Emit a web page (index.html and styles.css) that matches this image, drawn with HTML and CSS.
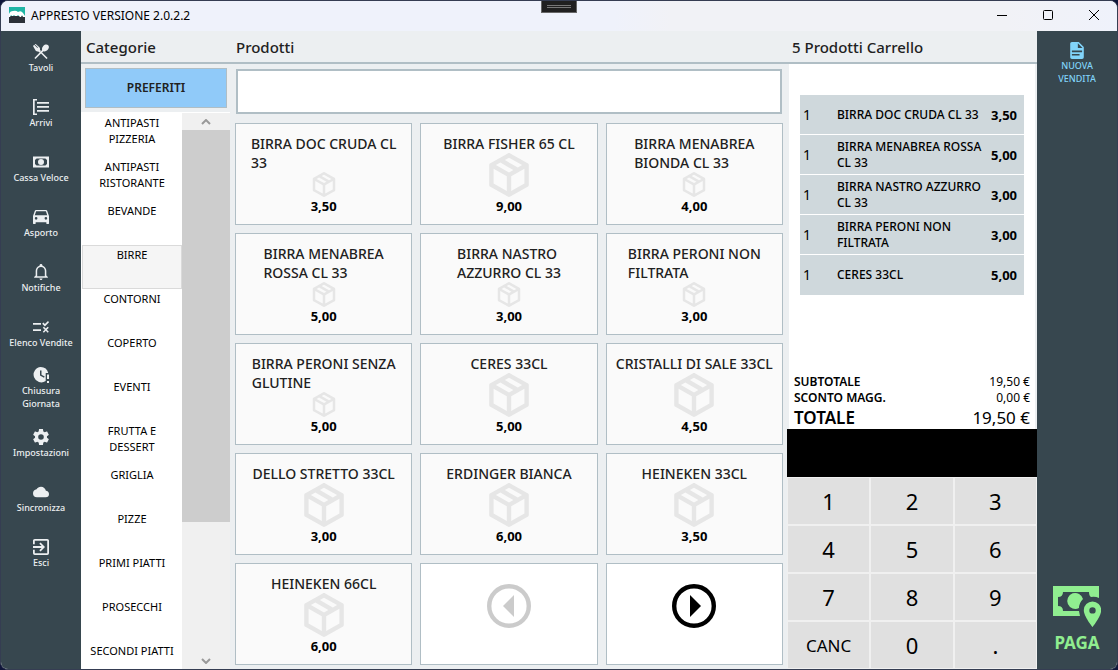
FILE: index.html
```html
<!DOCTYPE html>
<html lang="it">
<head>
<meta charset="utf-8">
<meta name="viewport" content="width=device-width, initial-scale=1">
<title>APPRESTO</title>
<link rel="stylesheet" href="styles.css">
</head>
<body>
<svg class="defs" aria-hidden="true">
  <symbol id="box" viewBox="3 2 18 20"><path d="M21,16.5C21,16.88 20.79,17.21 20.47,17.38L12.57,21.82C12.41,21.94 12.21,22 12,22C11.79,22 11.59,21.94 11.43,21.82L3.53,17.38C3.21,17.21 3,16.88 3,16.5V7.5C3,7.12 3.21,6.79 3.53,6.62L11.43,2.18C11.59,2.06 11.79,2 12,2C12.21,2 12.41,2.06 12.57,2.18L20.47,6.62C20.79,6.79 21,7.12 21,7.5V16.5M12,4.15L10.11,5.22L16,8.61L17.96,7.5L12,4.15M6.04,7.5L12,10.85L13.96,9.75L8.08,6.35L6.04,7.5M5,15.91L11,19.29V12.58L5,9.21V15.91M19,15.91V9.21L13,12.58V19.29L19,15.91Z"/></symbol>
</svg>
<div class="window">
  <header class="titlebar">
    <svg class="logo" viewBox="0 0 16 16"><path fill="#1fb5a5" d="M0 0h16v9H0z"/><path fill="#2b3038" d="M0 9h16v7H0z"/><path fill="#fff" d="M0 9V7q1-3 4-3 3-1 5 1 3-2 5 1l2 3v1h-2l-1-2-1 2h-1L9 8l-1 1H6L5 8 4 9H3L2 8l-1 2H0z"/></svg>
    <h1 class="app-name">APPRESTO VERSIONE 2.0.2.2</h1>
    <div class="grip"><span></span><span></span></div>
    <div class="win-buttons">
      <button type="button" aria-label="Riduci"><svg viewBox="0 0 12 12"><path d="M1 6.5h10"/></svg></button>
      <button type="button" aria-label="Ingrandisci"><svg viewBox="0 0 12 12"><rect x="1.500" y="1.500" width="9" height="9" rx="1"/></svg></button>
      <button type="button" aria-label="Chiudi"><svg viewBox="0 0 12 12"><path d="M1 1l10 10M11 1L1 11"/></svg></button>
    </div>
  </header>
  <div class="app">
    <nav class="sidebar">
      <button type="button"><svg viewBox="2 3 20 19"><path d="M14.88 11.53L13.41 13l6.88 6.88-1.41 1.41L12 14.41l-6.88 6.88-1.41-1.41 9.76-9.76c-.71-1.53-.21-3.68 1.38-5.27 1.91-1.92 4.650-2.280 6.110-.820 1.470 1.470 1.110 4.210-.810 6.120-1.590 1.590-3.740 2.090-5.270 1.380zM2.600 4.300l.9-.9 4.100 4 .6-.6-4-4 .9-.6 4.800 4.400c1 1.100 1 2.200.7 3.200l1.400 1.400-2 2-1.400-1.400c-1 .3-2.200.2-3.200-.8L2 5l.6-.7z"/></svg>Tavoli</button>
      <button type="button"><svg viewBox="0 0 16 16"><path d="M0 0h4v1.500H1.700v13H4V16H0zM4 3h12v1.800H4zm0 4h12v1.800H4zm0 4h12v1.800H4z"/></svg>Arrivi</button>
      <button type="button"><svg viewBox="0 0 16 16"><path fill-rule="evenodd" d="M0 2.500h16v11H0zM3.600 4.500L2 6v4l1.600 1.500h8.800L14 10V6l-1.600-1.500z"/><path fill-rule="evenodd" d="M8 5a3 3 0 110 6 3 3 0 010-6z"/></svg>Cassa Veloce</button>
      <button type="button"><svg viewBox="3 4 18 18"><path fill-rule="evenodd" d="M18.920 6C18.720 5.420 18.160 5 17.500 5H6.500C5.840 5 5.280 5.420 5.080 6L3 12V20A1 1 0 004 21H5A1 1 0 006 20V19H18V20A1 1 0 0019 21H20A1 1 0 0021 20V12zM5 11L6.500 6.500H17.500L19 11zM6.500 13a1.500 1.500 0 110 3 1.500 1.500 0 010-3zM17.500 13a1.500 1.500 0 110 3 1.500 1.500 0 010-3z"/></svg>Asporto</button>
      <button type="button"><svg viewBox="2 2 20 21"><path d="M10 21H14C14 22.1 13.1 23 12 23S10 22.1 10 21M21 19V20H3V19L5 17V11C5 7.9 7 5.2 10 4.3V4C10 2.9 10.9 2 12 2S14 2.9 14 4V4.3C17 5.2 19 7.9 19 11V17L21 19M17 11C17 8.2 14.8 6 12 6S7 8.2 7 11V18H17V11Z"/></svg>Notifiche</button>
      <button type="button"><svg viewBox="0 0 16 16"><path d="M0 4h8v1.700H0zm0 6.200h8v1.700H0zM9.200 4.800l1.200-1.200 1.500 1.500L15 2l1 1.200-4.100 4.200zM9.800 8.700l1.100-1 1.900 1.900 1.900-1.900 1.100 1-2 2 2 2-1.100 1.100-1.900-2-1.900 2-1.100-1.100 2-2z"/></svg>Elenco Vendite</button>
      <button type="button"><svg viewBox="0 0 16 16"><path fill-rule="evenodd" d="M7.700 0a7.700 7.700 0 017.500 6H12.700v8A7.700 7.700 0 117.700 0zM7 3.500v5l4 2.200.7-1.100-3.200-1.900V3.500zM14 7.500h2V12h-2zM14 14h2v2h-2z"/></svg>Chiusura<br>Giornata</button>
      <button type="button"><svg viewBox="2 2 20 20"><path d="M12,15.5A3.5,3.5 0 0,1 8.5,12A3.5,3.5 0 0,1 12,8.5A3.5,3.5 0 0,1 15.5,12A3.5,3.5 0 0,1 12,15.5M19.43,12.97C19.47,12.65 19.5,12.33 19.5,12C19.5,11.67 19.47,11.34 19.43,11L21.54,9.37C21.73,9.22 21.78,8.95 21.66,8.73L19.66,5.27C19.54,5.05 19.27,4.96 19.05,5.05L16.56,6.05C16.04,5.66 15.5,5.32 14.87,5.07L14.5,2.42C14.46,2.18 14.25,2 14,2H10C9.75,2 9.54,2.18 9.5,2.42L9.13,5.07C8.5,5.32 7.96,5.66 7.44,6.05L4.95,5.05C4.73,4.96 4.46,5.05 4.34,5.27L2.34,8.73C2.21,8.95 2.27,9.22 2.46,9.37L4.57,11C4.53,11.34 4.5,11.67 4.5,12C4.5,12.33 4.53,12.65 4.57,12.97L2.46,14.63C2.27,14.78 2.21,15.05 2.34,15.27L4.34,18.73C4.46,18.95 4.73,19.03 4.95,18.95L7.44,17.94C7.96,18.34 8.5,18.68 9.13,18.93L9.5,21.58C9.54,21.82 9.75,22 10,22H14C14.25,22 14.46,21.82 14.5,21.58L14.87,18.93C15.5,18.67 16.04,18.34 16.56,17.94L19.05,18.95C19.27,19.03 19.54,18.95 19.66,18.73L21.66,15.27C21.78,15.05 21.73,14.78 21.54,14.63L19.43,12.97Z"/></svg>Impostazioni</button>
      <button type="button"><svg viewBox="0 0 24 24"><path d="M19.35,10.03C18.67,6.59 15.64,4 12,4C9.11,4 6.6,5.64 5.35,8.03C2.34,8.36 0,10.9 0,14A6,6 0 0,0 6,20H19A5,5 0 0,0 24,15C24,12.36 21.95,10.22 19.35,10.03Z"/></svg>Sincronizza</button>
      <button type="button"><svg viewBox="3 3 18 18"><path d="M19,3H5C3.89,3 3,3.89 3,5V9H5V5H19V19H5V15H3V19A2,2 0 0,0 5,21H19A2,2 0 0,0 21,19V5C21,3.89 20.1,3 19,3M10.08,15.58L11.5,17L16.5,12L11.5,7L10.08,8.41L12.67,11H3V13H12.67L10.08,15.58Z"/></svg>Esci</button>
    </nav>
    <main class="workspace">
      <div class="headings"><h2>Categorie</h2><h2>Prodotti</h2><h2>5 Prodotti Carrello</h2></div>
      <section class="categories">
        <button type="button" class="favorites">PREFERITI</button>
        <div class="category-area">
          <div class="category-list">
            <button type="button">ANTIPASTI<br>PIZZERIA</button>
            <button type="button">ANTIPASTI<br>RISTORANTE</button>
            <button type="button">BEVANDE</button>
            <button type="button" class="selected">BIRRE</button>
            <button type="button">CONTORNI</button>
            <button type="button">COPERTO</button>
            <button type="button">EVENTI</button>
            <button type="button">FRUTTA E<br>DESSERT</button>
            <button type="button">GRIGLIA</button>
            <button type="button">PIZZE</button>
            <button type="button">PRIMI PIATTI</button>
            <button type="button">PROSECCHI</button>
            <button type="button">SECONDI PIATTI</button>
          </div>
          <div class="scrollbar">
            <svg viewBox="0 0 10 6"><path d="M1 5l4-4 4 4"/></svg>
            <div class="track"><div class="thumb"></div></div>
            <svg viewBox="0 0 10 6"><path d="M1 1l4 4 4-4"/></svg>
          </div>
        </div>
      </section>
      <section class="products">
        <input class="search" type="text" aria-label="Cerca prodotto">
        <div class="cards">
          <button type="button" class="card"><span class="name">BIRRA DOC CRUDA CL<br>33</span><svg><use href="#box"/></svg><b>3,50</b></button>
          <button type="button" class="card"><span class="name">BIRRA FISHER 65 CL</span><svg><use href="#box"/></svg><b>9,00</b></button>
          <button type="button" class="card"><span class="name">BIRRA MENABREA<br>BIONDA CL 33</span><svg><use href="#box"/></svg><b>4,00</b></button>
          <button type="button" class="card"><span class="name">BIRRA MENABREA<br>ROSSA CL 33</span><svg><use href="#box"/></svg><b>5,00</b></button>
          <button type="button" class="card"><span class="name">BIRRA NASTRO<br>AZZURRO CL 33</span><svg><use href="#box"/></svg><b>3,00</b></button>
          <button type="button" class="card"><span class="name">BIRRA PERONI NON<br>FILTRATA</span><svg><use href="#box"/></svg><b>3,00</b></button>
          <button type="button" class="card"><span class="name">BIRRA PERONI SENZA<br>GLUTINE</span><svg><use href="#box"/></svg><b>5,00</b></button>
          <button type="button" class="card"><span class="name">CERES 33CL</span><svg><use href="#box"/></svg><b>5,00</b></button>
          <button type="button" class="card"><span class="name">CRISTALLI DI SALE 33CL</span><svg><use href="#box"/></svg><b>4,50</b></button>
          <button type="button" class="card"><span class="name">DELLO STRETTO 33CL</span><svg><use href="#box"/></svg><b>3,00</b></button>
          <button type="button" class="card"><span class="name">ERDINGER BIANCA</span><svg><use href="#box"/></svg><b>6,00</b></button>
          <button type="button" class="card"><span class="name">HEINEKEN 33CL</span><svg><use href="#box"/></svg><b>3,50</b></button>
          <button type="button" class="card"><span class="name">HEINEKEN 66CL</span><svg><use href="#box"/></svg><b>6,00</b></button>
          <button type="button" class="pager previous" aria-label="Pagina precedente"><svg viewBox="0 0 44 44"><circle cx="22" cy="22" r="19.800"/><path d="M27 11v22L16 22z"/></svg></button>
          <button type="button" class="pager" aria-label="Pagina successiva"><svg viewBox="0 0 44 44"><circle cx="22" cy="22" r="19.800"/><path d="M18 11v22l11-11z"/></svg></button>
        </div>
      </section>
      <section class="cart">
        <div class="receipt">
          <table class="lines">
            <tbody>
              <tr><td class="qty">1</td><td>BIRRA DOC CRUDA CL 33</td><td class="amount">3,50</td></tr>
              <tr><td class="qty">1</td><td>BIRRA MENABREA ROSSA<br>CL 33</td><td class="amount">5,00</td></tr>
              <tr><td class="qty">1</td><td>BIRRA NASTRO AZZURRO<br>CL 33</td><td class="amount">3,00</td></tr>
              <tr><td class="qty">1</td><td>BIRRA PERONI NON<br>FILTRATA</td><td class="amount">3,00</td></tr>
              <tr><td class="qty">1</td><td>CERES 33CL</td><td class="amount">5,00</td></tr>
            </tbody>
          </table>
          <dl class="totals">
            <div><dt>SUBTOTALE</dt><dd>19,50 €</dd></div>
            <div><dt>SCONTO MAGG.</dt><dd>0,00 €</dd></div>
            <div class="grand"><dt>TOTALE</dt><dd>19,50 €</dd></div>
          </dl>
        </div>
        <div class="display"></div>
        <div class="keypad">
          <button type="button">1</button><button type="button">2</button><button type="button">3</button>
          <button type="button">4</button><button type="button">5</button><button type="button">6</button>
          <button type="button">7</button><button type="button">8</button><button type="button">9</button>
          <button type="button" class="cancel">CANC</button><button type="button">0</button><button type="button">.</button>
        </div>
      </section>
    </main>
    <aside class="actions">
      <button type="button" class="new-sale"><svg viewBox="4 2 16 20"><path d="M13,9H18.5L13,3.5V9M6,2H14L20,8V20A2,2 0 0,1 18,22H6C4.89,22 4,21.1 4,20V4C4,2.89 4.89,2 6,2M15,18V16H6V18H15M18,14V12H6V14H18Z"/></svg>NUOVA<br>VENDITA</button>
      <button type="button" class="pay"><svg viewBox="0 0 48 41"><path fill-rule="evenodd" d="M0 0h46v12q-4-2-8-1-2-1-2-5H10q0 5-5 5v9q5 0 5 5h16l1 5H0z"/><path d="M30 13a8 8 0 10-4 9q0-5 4-9z"/><path fill-rule="evenodd" d="M39.500 15.500a8.700 8.700 0 018.700 8.700c0 6-8.700 16.800-8.700 16.800s-8.700-10.800-8.700-16.800a8.700 8.700 0 018.700-8.700zm0 5.700a3.200 3.200 0 100 6.400 3.200 3.200 0 000-6.400z"/></svg>PAGA</button>
    </aside>
  </div>
</div>
</body>
</html>
```
FILE: styles.css
```css
* { box-sizing: border-box; }

body {
  margin: 0;
  background: #10163a;
  font-family: "Noto Sans", "Open Sans", sans-serif;
  font-size: 12px;
  color: #000;
}

button {
  margin: 0;
  padding: 0;
  border: 0;
  background: none;
  font: inherit;
  color: inherit;
}

h1, h2, dl, dd { margin: 0; }

.defs { display: none; }

.window {
  display: flex;
  flex-direction: column;
  height: 100vh;
  min-height: 640px;
  border: 1px solid #353d52;
  border-radius: 8px;
  overflow: hidden;
  background: #eceff1;
}

.titlebar {
  position: relative;
  display: flex;
  align-items: center;
  flex: none;
  height: 30px;
  padding: 0 0 2px 8px;
  background: linear-gradient(90deg, #eff2fb 55%, #f1f2f6 60%, #f1f2f6 90%, #eff2fb);
}

.logo { width: 16px; height: 16px; margin-right: 6px; }

.app-name { font-size: 12px; font-weight: 400; }

.grip {
  position: absolute;
  top: -1px;
  left: 50%;
  display: flex;
  flex-direction: column;
  justify-content: center;
  gap: 1px;
  width: 36px;
  height: 13px;
  padding: 0 5px;
  margin-left: -18px;
  border: 1px solid #666;
  background: #202020;
}

.grip span { height: 1px; background: #777; }

.win-buttons { display: flex; height: 100%; margin-left: auto; }

.win-buttons button {
  display: flex;
  align-items: center;
  justify-content: center;
  width: 46px;
}

.win-buttons svg { width: 12px; height: 12px; fill: none; stroke: #000; }

.app { display: flex; flex: 1; min-height: 0; }

.sidebar, .actions {
  display: flex;
  flex-direction: column;
  flex: none;
  width: 80px;
  background: #37474f;
}

.sidebar button {
  display: flex;
  flex-direction: column;
  align-items: center;
  justify-content: center;
  height: 55px;
}

.sidebar button, .new-sale {
  font-size: 9px;
  font-weight: 500;
  line-height: 13px;
  color: #eceff1;
}

.sidebar svg { width: 16px; height: 16px; margin-bottom: 1px; fill: #eceff1; }

.workspace {
  display: grid;
  grid-template-columns: 154px 1fr 250px;
  grid-template-rows: 33px 1fr;
  flex: 1;
  min-width: 0;
}

.headings {
  display: grid;
  grid-template-columns: subgrid;
  grid-column: 1 / -1;
  align-items: center;
  border-bottom: 2px solid #b0bec5;
}

.headings h2 {
  padding-left: 5px;
  font-size: 15px;
  font-weight: 500;
  color: #212121;
}

.headings h2:nth-child(2) { padding-left: 1px; }

.categories {
  display: flex;
  flex-direction: column;
  min-height: 0;
  padding-right: 5px;
}

.favorites {
  flex: none;
  height: 40px;
  margin: 4px 3px 4px 4px;
  padding-bottom: 2px;
  border: 1px solid #b0bec5;
  background: #90caf9;
  font-size: 12px;
  font-weight: 600;
  color: #212121;
}

.category-area {
  display: flex;
  flex: 1;
  min-height: 0;
  padding-top: 1px;
  background: #fff;
}

.category-list { flex: 1; padding-left: 1px; overflow: hidden; }

.category-list button {
  display: flex;
  justify-content: center;
  width: 100%;
  height: 44px;
  padding-top: 1px;
  border: 1px solid transparent;
  font-size: 11px;
  line-height: 16px;
}

.category-list .selected { border-color: #dadada; background: #f5f5f5; }

.scrollbar {
  display: flex;
  flex-direction: column;
  align-items: center;
  width: 48px;
  background: #f0f0f0;
}

.scrollbar svg {
  width: 10px;
  height: 6px;
  margin: 6px 0 5px;
  fill: none;
  stroke: #999;
  stroke-width: 2px;
}

.track { flex: 1; width: 100%; }

.thumb { height: 75%; background: #cdcdcd; }

.products {
  display: flex;
  flex-direction: column;
  gap: 9px;
  min-height: 0;
  padding: 5px 4px 4px 0;
}

.search {
  flex: none;
  height: 45px;
  margin: 0 1px;
  padding: 0 8px;
  border: 2px solid #b0bec5;
  background: #fff;
  font: inherit;
  font-size: 16px;
}

.cards {
  display: grid;
  grid-template-columns: repeat(3, 1fr);
  grid-auto-rows: 1fr;
  gap: 8px;
  flex: 1;
  min-height: 0;
}

.card, .pager {
  display: flex;
  flex-direction: column;
  align-items: center;
  min-height: 0;
  border: 1px solid #b0bec5;
}

.card { padding: 10px 8px 8px; background: #fafafa; }

.name {
  font-size: 14px;
  font-weight: 500;
  line-height: 19px;
  text-align: left;
  color: #212121;
}

.card svg { flex: 1; width: 40px; min-height: 0; fill: #e6e6e6; }

.card b { font-size: 13px; font-weight: 700; line-height: 19px; }

.pager { justify-content: center; padding-bottom: 16px; background: #fff; }

.pager svg { width: 44px; height: 44px; }

.pager circle { fill: none; stroke: #000; stroke-width: 4.4; }

.previous svg { opacity: 0.2; }

.cart { display: flex; flex-direction: column; min-height: 0; }

.receipt {
  display: flex;
  flex-direction: column;
  justify-content: space-between;
  flex: 1;
  margin: 0 2px;
  padding: 30px 5px 0;
  background: #fff;
}

.lines {
  width: 224px;
  margin-left: 6px;
  border-collapse: collapse;
  font-size: 12px;
  font-weight: 500;
  line-height: 16px;
}

.lines tr {
  height: 40px;
  border-top: 1px solid #fff;
  background: #cfd8dc;
}

.lines td { padding: 0; white-space: nowrap; }

.lines .qty { width: 37px; padding-left: 3px; font-size: 14px; font-weight: 400; }

.lines .amount {
  padding-right: 7px;
  font-size: 13px;
  font-weight: 700;
  text-align: right;
}

.totals div {
  display: flex;
  justify-content: space-between;
  line-height: 16px;
}

.totals dt { font-weight: 600; }

.totals .grand { font-size: 17px; line-height: 23px; }

.display { height: 48px; background: #000; }

.keypad {
  display: grid;
  grid-template-columns: repeat(3, 1fr);
  grid-auto-rows: 48px;
}

.keypad button {
  border: 1px solid #f0f0f0;
  background: #e0e0e0;
  font-size: 22px;
}

.keypad .cancel { font-size: 17px; }

.actions { justify-content: space-between; }

.new-sale {
  display: flex;
  flex-direction: column;
  align-items: center;
  padding-top: 11px;
  color: #81d4fa;
}

.new-sale svg { width: 16px; height: 17px; fill: #81d4fa; }

.pay {
  display: flex;
  flex-direction: column;
  align-items: center;
  gap: 4px;
  padding-bottom: 14px;
  font-size: 17px;
  font-weight: 700;
  line-height: 24px;
  color: #90ee90;
}

.pay svg { width: 48px; height: 41px; fill: #90ee90; }
```
